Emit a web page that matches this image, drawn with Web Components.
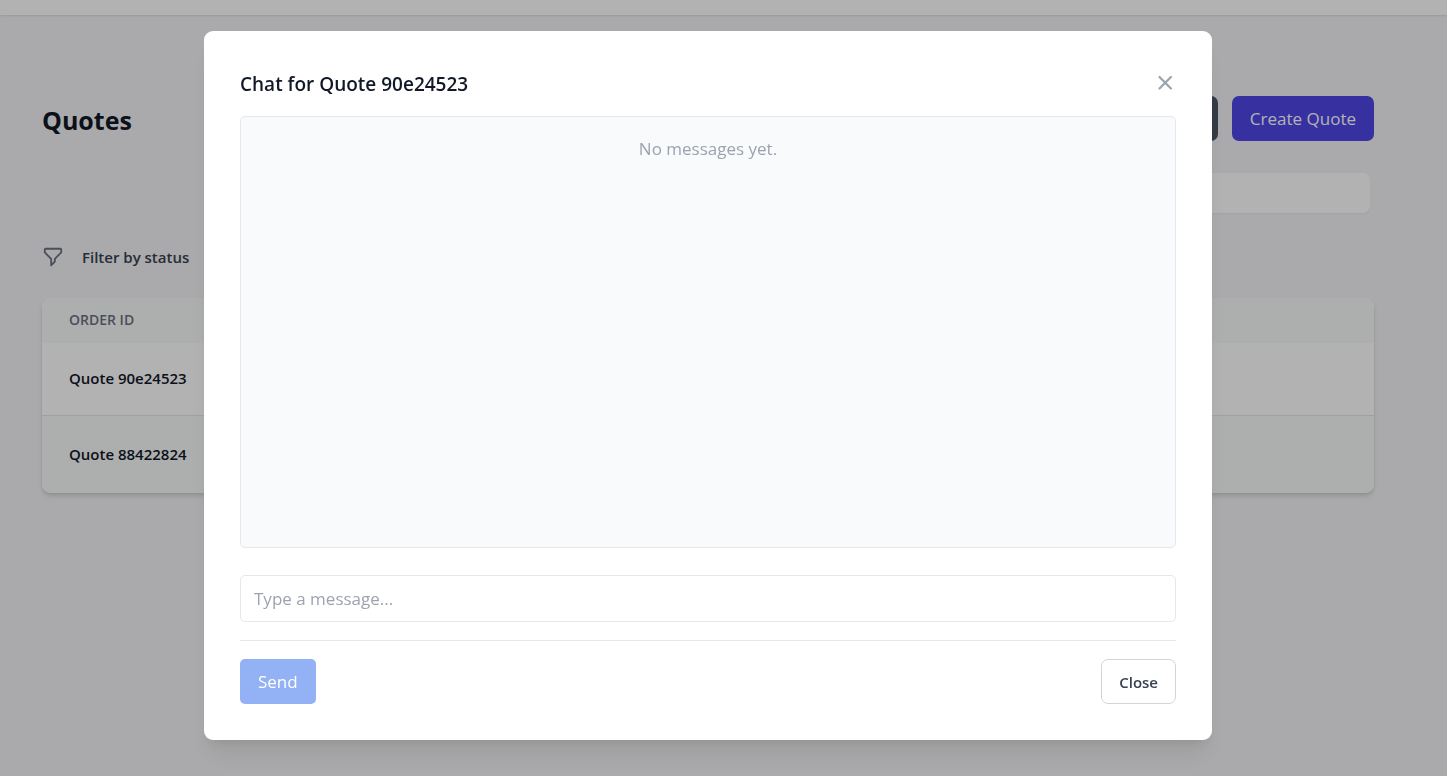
<!DOCTYPE html>
<html lang="en">
<head>
<meta charset="utf-8">
<meta name="viewport" content="width=device-width, initial-scale=1">
<title>Quotes</title>
<style>
  html, body {
    margin: 0;
    min-height: 100%;
    background: #f4f4f6;
    font-family: "Open Sans", "Noto Sans", sans-serif;
    font-size: 17px;
    color: #111827;
  }
</style>
</head>
<body>
<quotes-page></quotes-page>
<chat-dialog heading="Chat for Quote 90e24523"></chat-dialog>

<script>
/* A button with a few looks: dark, primary, send and outline. */
class AppButton extends HTMLElement {
  constructor() {
    super()
    this.attachShadow({ mode: 'open' })
  }

  connectedCallback() {
    this.shadowRoot.innerHTML = `
      <style>
        :host { display: inline-flex; }
        button {
          box-sizing: border-box;
          height: 45px;
          padding: 0 17px;
          border: 1px solid transparent;
          border-radius: 7px;
          background: #4b5563;
          color: #fff;
          font: inherit;
        }
        :host([look=primary]) button { background: #4f46e5; }
        :host([look=send]) button { background: #93b1f5; border-radius: 5px; }
        :host([look=outline]) button {
          background: #fff;
          border-color: #d1d5db;
          color: #374151;
          font-size: 15px;
          font-weight: 600;
        }
      </style>
      <button type="button"><slot></slot></button>`
    if (this.hasAttribute('label')) {
      this.shadowRoot.querySelector('button').setAttribute('aria-label', this.getAttribute('label'))
    }
    this.shadowRoot.querySelector('button').disabled = this.hasAttribute('disabled')
  }
}

/* Table of orders, rows come from the "orders" attribute. */
class QuoteTable extends HTMLElement {
  constructor() {
    super()
    this.attachShadow({ mode: 'open' })
  }

  connectedCallback() {
    var rows = this.getAttribute('orders').split(',')
      .map(id => `<tr><td>Quote ${id}</td></tr>`)
      .join('')

    this.shadowRoot.innerHTML = `
      <style>
        :host {
          display: block;
          overflow: hidden;
          border-radius: 9px;
          background: #fff;
          box-shadow: 0 4px 6px -1px rgba(0, 0, 0, .1), 0 2px 4px -1px rgba(0, 0, 0, .1);
        }
        table { width: 100%; border-collapse: separate; border-spacing: 0; }
        th, td { box-sizing: border-box; padding: 0 27px 2px; text-align: left; }
        th {
          height: 45px;
          background: #f8fbf9;
          color: #6b7280;
          font-size: 14px;
          font-weight: 600;
          text-transform: uppercase;
        }
        td { height: 72px; font-size: 15px; font-weight: 600; }
        tr:nth-child(even) td {
          height: 78px;
          border-top: 1px solid #e5e7eb;
          background: #f8fbf9;
        }
      </style>
      <table>
        <thead><tr><th scope="col">Order ID</th></tr></thead>
        <tbody>${rows}</tbody>
      </table>`
  }
}

class QuotesPage extends HTMLElement {
  constructor() {
    super()
    this.attachShadow({ mode: 'open' })
  }

  connectedCallback() {
    this.shadowRoot.innerHTML = `
      <style>
        :host { display: block; }
        header {
          height: 15px;
          background: #fff;
          box-shadow: 0 1px 2px rgba(0, 0, 0, .1);
        }
        main { padding: 81px 73px 48px 42px; }
        .top { display: flex; align-items: center; gap: 14px; }
        h1 {
          flex: 1;
          margin: 0;
          padding-top: 2px;
          font-size: 25px;
          line-height: 36px;
          font-weight: 700;
        }
        .search { display: flex; justify-content: flex-end; padding: 32px 4px 0; }
        .search input {
          box-sizing: border-box;
          width: 320px;
          height: 40px;
          padding: 0 14px;
          border: 0;
          border-radius: 7px;
          background: #fff;
          box-shadow: 0 1px 2px rgba(0, 0, 0, .05);
          font: inherit;
        }
        .filter {
          display: flex;
          align-items: center;
          gap: 18px;
          height: 32px;
          margin: 28px 0 25px;
          color: #374151;
          font-size: 15px;
          font-weight: 600;
        }
        .filter svg { width: 22px; height: 22px; color: #6b7280; }
      </style>
      <header></header>
      <main>
        <div class="top">
          <h1>Quotes</h1>
          <app-button label="Export"></app-button>
          <app-button look="primary">Create Quote</app-button>
        </div>
        <div class="search"><input type="search" aria-label="Search quotes"></div>
        <div class="filter">
          <svg viewBox="0 0 24 24" fill="none" stroke="currentColor" stroke-width="2" stroke-linecap="round" stroke-linejoin="round" aria-hidden="true">
            <path d="M3 4a1 1 0 011-1h16a1 1 0 011 1v2.586a1 1 0 01-.293.707l-6.414 6.414a1 1 0 00-.293.707V17l-4 4v-6.586a1 1 0 00-.293-.707L3.293 7.293A1 1 0 013 6.586V4z"/>
          </svg>
          <span>Filter by status</span>
        </div>
        <quote-table orders="90e24523,88422824"></quote-table>
      </main>`
  }
}

/* Modal chat window on a dimmed backdrop. */
class ChatDialog extends HTMLElement {
  constructor() {
    super()
    this.attachShadow({ mode: 'open' })
  }

  connectedCallback() {
    this.shadowRoot.innerHTML = `
      <style>
        :host {
          position: fixed;
          inset: 0;
          display: flex;
          align-items: center;
          justify-content: center;
          padding: 31px 31px 36px 0;
          background: rgba(0, 0, 0, .3);
        }
        section {
          box-sizing: border-box;
          width: 100%;
          max-width: 1008px;
          padding: 36px;
          border-radius: 9px;
          background: #fff;
          box-shadow: 0 20px 25px -5px rgba(0, 0, 0, .08), 0 8px 10px -5px rgba(0, 0, 0, .08);
        }
        header {
          display: flex;
          align-items: center;
          justify-content: space-between;
          height: 31px;
          margin-bottom: 18px;
        }
        h2 { margin: 0; padding-top: 3px; font-size: 19px; line-height: 28px; font-weight: 600; }
        .x { display: flex; padding: 0; border: 0; background: none; color: #9ca3af; }
        .x svg { width: 22px; height: 22px; }
        .messages {
          box-sizing: border-box;
          height: 432px;
          padding: 18px;
          border: 1px solid #e5e7eb;
          border-radius: 5px;
          background: #f9fafc;
          color: #9ca3af;
          text-align: center;
          line-height: 27px;
        }
        .messages p { margin: 0; }
        input {
          box-sizing: border-box;
          display: block;
          width: 100%;
          height: 47px;
          margin: 27px 0 18px;
          padding: 0 13px;
          border: 1px solid #e5e7eb;
          border-radius: 5px;
          background: #fff;
          color: inherit;
          font: inherit;
        }
        input::placeholder { color: #9ca3af; }
        footer {
          display: flex;
          justify-content: space-between;
          padding-top: 18px;
          border-top: 1px solid #e5e7eb;
        }
      </style>
      <section role="dialog" aria-modal="true" aria-labelledby="title">
        <header>
          <h2 id="title">${this.getAttribute('heading')}</h2>
          <button class="x" type="button" aria-label="Dismiss">
            <svg viewBox="0 0 24 24" fill="none" stroke="currentColor" stroke-width="2.4" stroke-linecap="round" stroke-linejoin="round">
              <path d="M6 18L18.500 5.500M6 5.500l12.500 12.500"/>
            </svg>
          </button>
        </header>
        <div class="messages"><p>No messages yet.</p></div>
        <input type="text" placeholder="Type a message..." aria-label="Message">
        <footer>
          <app-button look="send" disabled>Send</app-button>
          <app-button look="outline">Close</app-button>
        </footer>
      </section>`
  }
}

customElements.define('app-button', AppButton)
customElements.define('quote-table', QuoteTable)
customElements.define('quotes-page', QuotesPage)
customElements.define('chat-dialog', ChatDialog)
</script>
</body>
</html>
